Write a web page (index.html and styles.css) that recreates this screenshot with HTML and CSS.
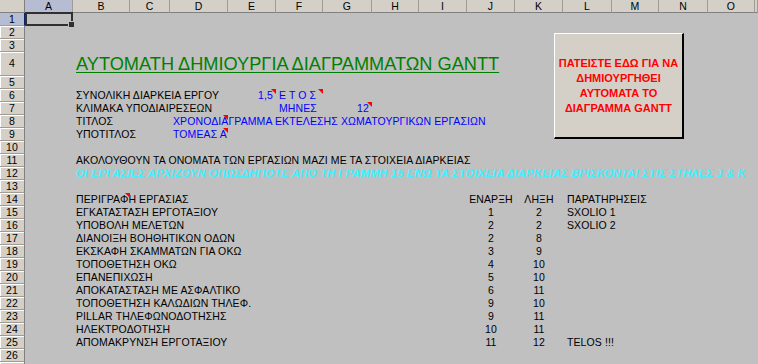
FILE: index.html
```html
<!DOCTYPE html>
<html lang="el">
  <head>
    <meta charset="UTF-8" />
    <title>Gantt</title>
    <link rel="stylesheet" href="styles.css">
  </head>
  <body>
    <div class="sheet">
      <div class="row head-row">
        <div class="corner"></div>
        <div class="col-head sel">A</div>
        <div class="col-head">B</div>
        <div class="col-head">C</div>
        <div class="col-head">D</div>
        <div class="col-head">E</div>
        <div class="col-head">F</div>
        <div class="col-head">G</div>
        <div class="col-head">H</div>
        <div class="col-head">I</div>
        <div class="col-head">J</div>
        <div class="col-head">K</div>
        <div class="col-head">L</div>
        <div class="col-head">M</div>
        <div class="col-head">N</div>
        <div class="col-head">O</div>
        <div class="col-head"></div>
      </div>

      <div class="row"><div class="row-head sel">1</div><div class="cell a active"></div></div>
      <div class="row"><div class="row-head">2</div></div>
      <div class="row"><div class="row-head">3</div></div>
      <div class="row tall">
        <div class="row-head">4</div>
        <div class="cell b title">ΑΥΤΟΜΑΤΗ ΔΗΜΙΟΥΡΓΙΑ ΔΙΑΓΡΑΜΜΑΤΩΝ GANTT</div>
      </div>
      <div class="row"><div class="row-head">5</div></div>
      <div class="row">
        <div class="row-head">6</div>
        <div class="cell b">ΣΥΝΟΛΙΚΗ ΔΙΑΡΚΕΙΑ ΕΡΓΟΥ</div>
        <div class="cell e input right note">1,5</div>
        <div class="cell f input note">Ε Τ Ο Σ</div>
      </div>
      <div class="row">
        <div class="row-head">7</div>
        <div class="cell b">ΚΛΙΜΑΚΑ ΥΠΟΔΙΑΙΡΕΣΕΩΝ</div>
        <div class="cell f input">ΜΗΝΕΣ</div>
        <div class="cell g input right note">12</div>
      </div>
      <div class="row">
        <div class="row-head">8</div>
        <div class="cell b">ΤΙΤΛΟΣ</div>
        <div class="cell d input note">ΧΡΟΝΟΔΙΑΓΡΑΜΜΑ ΕΚΤΕΛΕΣΗΣ ΧΩΜΑΤΟΥΡΓΙΚΩΝ ΕΡΓΑΣΙΩΝ</div>
      </div>
      <div class="row">
        <div class="row-head">9</div>
        <div class="cell b">ΥΠΟΤΙΤΛΟΣ</div>
        <div class="cell d input note">ΤΟΜΕΑΣ Α</div>
      </div>
      <div class="row"><div class="row-head">10</div></div>
      <div class="row">
        <div class="row-head">11</div>
        <div class="cell b">ΑΚΟΛΟΥΘΟΥΝ ΤΑ ΟΝΟΜΑΤΑ ΤΩΝ ΕΡΓΑΣΙΩΝ ΜΑΖΙ ΜΕ ΤΑ ΣΤΟΙΧΕΙΑ ΔΙΑΡΚΕΙΑΣ</div>
      </div>
      <div class="row">
        <div class="row-head">12</div>
        <div class="cell b hint">ΟΙ ΕΡΓΑΣΙΕΣ ΑΡΧΙΖΟΥΝ ΟΠΩΣΔΗΠΟΤΕ ΑΠΟ ΤΗ ΓΡΑΜΜΗ 15 ΕΝΩ ΤΑ ΣΤΟΙΧΕΙΑ ΔΙΑΡΚΕΙΑΣ ΒΡΙΣΚΟΝΤΑΙ ΣΤΙΣ ΣΤΗΛΕΣ J &amp; K</div>
      </div>
      <div class="row"><div class="row-head">13</div></div>
      <div class="row">
        <div class="row-head">14</div>
        <div class="cell b note">ΠΕΡΙΓΡΑΦΗ ΕΡΓΑΣΙΑΣ</div>
        <div class="cell j center">ΕΝΑΡΞΗ</div>
        <div class="cell k center">ΛΗΞΗ</div>
        <div class="cell l">ΠΑΡΑΤΗΡΗΣΕΙΣ</div>
      </div>
      <div class="row">
        <div class="row-head">15</div>
        <div class="cell b">ΕΓΚΑΤΑΣΤΑΣΗ ΕΡΓΟΤΑΞΙΟΥ</div>
        <div class="cell j center">1</div><div class="cell k center">2</div>
        <div class="cell l">SXOLIO 1</div>
      </div>
      <div class="row">
        <div class="row-head">16</div>
        <div class="cell b">ΥΠΟΒΟΛΗ ΜΕΛΕΤΩΝ</div>
        <div class="cell j center">2</div><div class="cell k center">2</div>
        <div class="cell l">SXOLIO 2</div>
      </div>
      <div class="row">
        <div class="row-head">17</div>
        <div class="cell b">ΔΙΑΝΟΙΞΗ ΒΟΗΘΗΤΙΚΩΝ ΟΔΩΝ</div>
        <div class="cell j center">2</div><div class="cell k center">8</div>
      </div>
      <div class="row">
        <div class="row-head">18</div>
        <div class="cell b">ΕΚΣΚΑΦΗ ΣΚΑΜΜΑΤΩΝ ΓΙΑ ΟΚΩ</div>
        <div class="cell j center">3</div><div class="cell k center">9</div>
      </div>
      <div class="row">
        <div class="row-head">19</div>
        <div class="cell b">ΤΟΠΟΘΕΤΗΣΗ ΟΚΩ</div>
        <div class="cell j center">4</div><div class="cell k center">10</div>
      </div>
      <div class="row">
        <div class="row-head">20</div>
        <div class="cell b">ΕΠΑΝΕΠΙΧΩΣΗ</div>
        <div class="cell j center">5</div><div class="cell k center">10</div>
      </div>
      <div class="row">
        <div class="row-head">21</div>
        <div class="cell b">ΑΠΟΚΑΤΑΣΤΑΣΗ ΜΕ ΑΣΦΑΛΤΙΚΟ</div>
        <div class="cell j center">6</div><div class="cell k center">11</div>
      </div>
      <div class="row">
        <div class="row-head">22</div>
        <div class="cell b">ΤΟΠΟΘΕΤΗΣΗ ΚΑΛΩΔΙΩΝ ΤΗΛΕΦ.</div>
        <div class="cell j center">9</div><div class="cell k center">10</div>
      </div>
      <div class="row">
        <div class="row-head">23</div>
        <div class="cell b">PILLAR ΤΗΛΕΦΩΝΟΔΟΤΗΣΗΣ</div>
        <div class="cell j center">9</div><div class="cell k center">11</div>
      </div>
      <div class="row">
        <div class="row-head">24</div>
        <div class="cell b">ΗΛΕΚΤΡΟΔΟΤΗΣΗ</div>
        <div class="cell j center">10</div><div class="cell k center">11</div>
      </div>
      <div class="row">
        <div class="row-head">25</div>
        <div class="cell b">ΑΠΟΜΑΚΡΥΝΣΗ ΕΡΓΟΤΑΞΙΟΥ</div>
        <div class="cell j center">11</div><div class="cell k center">12</div>
        <div class="cell l">TELOS !!!</div>
      </div>
      <div class="row"><div class="row-head">26</div></div>
      <div class="row"><div class="row-head"></div></div>

      <!-- macro button floating over the sheet -->
      <button class="macro-button">ΠΑΤΕΙΣΤΕ ΕΔΩ ΓΙΑ ΝΑ<br>ΔΗΜΙΟΥΡΓΗΘΕΙ<br>ΑΥΤΟΜΑΤΑ ΤΟ<br>ΔΙΑΓΡΑΜΜΑ GANTT</button>
    </div>
  </body>
</html>
```

FILE: styles.css
```css
* {
  margin: 0;
  padding: 0;
  box-sizing: border-box;
}

body {
  font-family: "Liberation Sans", Arial, sans-serif;
  font-size: 10.5px;
  letter-spacing: 0.1px;
  background-color: #c0c0c0;
  color: #000;
  width: 758px;
  height: 364px;
  overflow: hidden;
}

.sheet {
  position: relative;
  width: 758px;
  height: 364px;
  overflow: hidden;
}

.row {
  display: grid;
  grid-template-columns: 25px 48px 57px 40px 58px 48px 47px 49px 47px 48px 48px 48px 49px 47px 49px 47px 1fr;
  grid-template-rows: 13px;
  height: 13px;
}

.row.tall {
  grid-template-rows: 24px;
  height: 24px;
}

/* headers */
.head-row {
  background-color: #d4d0c8;
}

.corner,
.col-head {
  background-color: #d4d0c8;
  border-right: 1px solid #a09c94;
  border-bottom: 1px solid #808080;
  text-align: center;
  line-height: 12px;
  font-size: 10.5px;
  color: #000;
}

.corner {
  border-right: 1px solid #808080;
}

.col-head.sel {
  background-color: #b6bdd2;
  border-bottom: 1px solid #0a246a;
}

.row-head {
  grid-column: 1;
  background-color: #d4d0c8;
  border-right: 1px solid #808080;
  border-bottom: 1px solid #a09c94;
  box-shadow: inset 1px 1px 0 #fff;
  text-align: center;
  line-height: 12px;
  font-size: 10.5px;
}

.row.tall .row-head {
  line-height: 23px;
}

.row-head.sel {
  background-color: #b6bdd2;
  border-right: 1px solid #0a246a;
  box-shadow: none;
}

/* cells */
.cell {
  position: relative;
  white-space: nowrap;
  line-height: 13px;
  padding: 0 3px;
}

.a { grid-column: 2; }
.b { grid-column: 3; }
.d { grid-column: 5; }
.e { grid-column: 6; }
.f { grid-column: 7; }
.g { grid-column: 8; }
.j { grid-column: 11; }
.k { grid-column: 12; }
.l { grid-column: 13; }

.right {
  text-align: right;
}

.center {
  text-align: center;
  padding: 0;
}

.l {
  padding-left: 4px;
}

.input {
  color: #0000ff;
}

.title {
  font-size: 18.2px;
  letter-spacing: 0;
  line-height: 21px;
  color: #008000;
  text-decoration: underline;
  text-underline-offset: 2px;
  align-self: end;
  padding-bottom: 1px;
}

.hint {
  font-size: 11px;
  letter-spacing: 0.25px;
  color: #40f0ff;
  font-weight: bold;
  font-style: italic;
}

/* comment marker */
.note::after {
  content: "";
  position: absolute;
  top: 0;
  right: 0;
  width: 0;
  height: 0;
  border-left: 5px solid transparent;
  border-top: 5px solid #ff0000;
}

/* active cell A1 */
.active {
  border: 2px solid #303030;
  margin: -1px 0 0 0;
}

.active::after {
  content: "";
  position: absolute;
  right: -4px;
  bottom: -4px;
  width: 5px;
  height: 5px;
  background-color: #303030;
  border: 1px solid #c0c0c0;
}

.macro-button {
  position: absolute;
  left: 554px;
  top: 33px;
  width: 130px;
  height: 106px;
  background-color: #d4d0c8;
  border: none;
  border-top: 1px solid #fff;
  border-left: 1px solid #fff;
  border-right: 2px solid #000;
  border-bottom: 2px solid #000;
  font-family: "Liberation Sans", Arial, sans-serif;
  font-size: 11px;
  font-weight: bold;
  line-height: 15px;
  color: #ff0000;
  text-align: center;
  padding: 0;
  white-space: nowrap;
}
```
